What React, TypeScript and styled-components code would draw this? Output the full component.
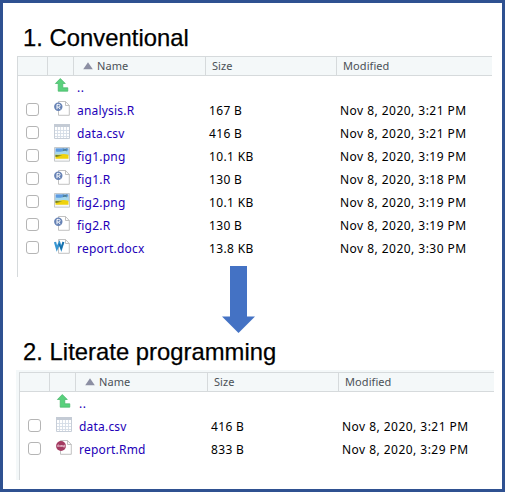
import React from "react";
import styled, { createGlobalStyle } from "styled-components";

const Global = createGlobalStyle`
  *, *::before, *::after { box-sizing: border-box; }
  body { margin: 0; background: #fff; }
`;

const Frame = styled.main`
  width: 505px;
  height: 492px;
  border: 3px solid #2f5191;
  background: #fff;
  display: flex;
  flex-direction: column;
  overflow: hidden;
`;

const Heading = styled.h1<{ $top: number }>`
  margin: ${(p) => p.$top}px 0 0 20px;
  height: 32px;
  font: 400 23.8px/28px "Liberation Sans", Arial, sans-serif;
  letter-spacing: 0.03px;
  color: #000;
  white-space: nowrap;
  flex: none;
  -webkit-text-stroke: 0.25px #000;
`;

const Panel = styled.section<{ $second?: boolean }>`
  flex: none;
  width: ${(p) => (p.$second ? 478 : 475)}px;
  height: ${(p) => (p.$second ? 110 : 221)}px;
  margin-left: ${(p) => (p.$second ? 13 : 14)}px;
  padding: ${(p) => (p.$second ? "2px 0 0 3px" : "0")};
  background: linear-gradient(#f4f8f9, #f4f8f9) 0 0 / ${(p) => (p.$second ? "3px 100%" : "0 0")} no-repeat,
    linear-gradient(#f4f8f9, #f4f8f9) 0 0 / ${(p) => (p.$second ? "100% 2px" : "0 0")} no-repeat;
`;

const Table = styled.div`
  height: 100%;
  border-left: 1px solid #d6dadc;
  font-family: "Noto Sans", "Open Sans", sans-serif;
`;

const columns = "29px 26px 132px 131px 1fr";

const HeaderRow = styled.div`
  display: grid;
  grid-template-columns: ${columns};
  height: 20px;
  border-top: 1px solid #d6dadc;
  border-bottom: 1px solid #d6dadc;
  background: #f4f8f9;
`;

const HeaderCell = styled.div`
  display: flex;
  align-items: center;
  gap: 4px;
  padding-left: 6px;
  border-left: 1px solid #d6dadc;
  font-size: 11px;
  line-height: 18px;
  letter-spacing: 0.08px;
  color: #4b5157;
  &:first-child { border-left: 0; }
  &:nth-child(3) { padding-left: 9px; }
`;

const Row = styled.div`
  display: grid;
  grid-template-columns: ${columns};
  height: 23px;
  align-items: center;
`;

const Check = styled.input`
  appearance: none;
  width: 13px;
  height: 13px;
  margin: 0 0 2px 8px;
  border: 1px solid #b5b5b5;
  border-radius: 3px;
  background: #fff;
`;

const IconCell = styled.div`
  display: flex;
  padding: 0 0 4px 7px;
`;

const FileLink = styled.a<{ $track: number }>`
  padding-left: 4px;
  font-size: 12px;
  line-height: 23px;
  letter-spacing: ${(p) => p.$track}px;
  color: #2200b8;
  text-decoration: none;
  white-space: nowrap;
`;

const Value = styled.span<{ $track: number }>`
  padding-left: 4px;
  font-size: 12px;
  line-height: 23px;
  letter-spacing: ${(p) => p.$track}px;
  color: #000;
  white-space: nowrap;
`;

const ArrowWrap = styled.div`
  flex: none;
  display: flex;
  height: 67px;
  margin: -11px 0 0 219px;
`;

type Kind = "up" | "r" | "csv" | "png" | "docx" | "rmd";

const Page = () => (
  <path d="M4.5 1.5h7l3.8 4v9.8H4.5z M11.5 1.5v4h3.8" fill="#fff" stroke="#b3b3b3" strokeWidth=".8" />
);

const FileIcon = ({ kind }: { kind: Kind }) => (
  <svg width="17" height="17" viewBox="0 0 17 17" aria-hidden="true">
    {kind === "up" && (
      <path d="M6.3 1.5 11.3 6.5H8.8v4.3h5v3.4H4.2V6.5H1.4z" fill="#59d17c" stroke="#45b468" strokeWidth=".7" strokeLinejoin="round" />
    )}
    {kind === "r" && (
      <>
        <Page />
        <circle cx="4.3" cy="6.8" r="4.2" fill="#6682b5" />
        <path d="M3 9.2V4.4h1.6q1.5 0 1.5 1.3T4.6 7H3.1M4.6 7.1 6.2 9.2" fill="none" stroke="#fff" strokeWidth="1" />
      </>
    )}
    {kind === "csv" && (
      <>
        <path d="M.5 1.5h15v14H.5z" fill="#fff" stroke="#c7ced8" />
        <path d="M0 1h16v3H0z" fill="#c4cbd5" />
        <path d="M3.5 4v11M6.5 4v11M9.5 4v11M12.5 4v11M1 7.5h14M1 10.5h14M1 13.5h14" stroke="#d5dce6" strokeWidth=".9" />
      </>
    )}
    {kind === "png" && (
      <>
        <path d="M.5 1.5h15v13.7H.5z" fill="#f7f8f8" stroke="#b8bdbf" strokeWidth=".8" />
        <path d="M1.5 2.3h13v7h-13z" fill="#5c9be0" />
        <path d="M1.5 5.4q4 1 7-.2t6-.5v5h-13z" fill="#a6d8ee" />
        <path d="M1.5 8.5q4 .5 6-.2t7 .4v4h-13z" fill="#efd20c" />
        <path d="M1.5 9q4 .6 7 .4l-7 1.7z" fill="#65752d" />
        <path d="m8.8 2.7 2 1.3-2 .9m2-.9 2.4-1.3m-2.4 1.3 2.3 1" fill="none" stroke="#436d70" strokeWidth=".7" />
      </>
    )}
    {kind === "docx" && (
      <>
        <Page />
        <path d="m1 4 1.9 6.5L5.4 5l1.9 5.5L9.4 4" fill="none" stroke="#3795d1" strokeWidth="2.2" />
        <path d="m5 5.8 2.2 4.8L9.4 4" fill="none" stroke="#176da7" strokeWidth="1.4" />
      </>
    )}
    {kind === "rmd" && (
      <>
        <Page />
        <circle cx="5" cy="7" r="4.9" fill="#a33a61" />
        <path d="M1.8 8V6h1l.6.5-.6.6h-.9m1 0 .7.9M4.4 8V6.5h2.3V8M5.5 6.6V8m3.3-2.3V8H7.4V6.7h1.4" fill="none" stroke="#f4dae3" strokeWidth=".65" />
      </>
    )}
  </svg>
);

interface FileEntry {
  name: string;
  kind: Kind;
  size: string;
  modified: string;
}

const conventional: FileEntry[] = [
  { name: "analysis.R", kind: "r", size: "167 B", modified: "Nov 8, 2020, 3:21 PM" },
  { name: "data.csv", kind: "csv", size: "416 B", modified: "Nov 8, 2020, 3:21 PM" },
  { name: "fig1.png", kind: "png", size: "10.1 KB", modified: "Nov 8, 2020, 3:19 PM" },
  { name: "fig1.R", kind: "r", size: "130 B", modified: "Nov 8, 2020, 3:18 PM" },
  { name: "fig2.png", kind: "png", size: "10.1 KB", modified: "Nov 8, 2020, 3:19 PM" },
  { name: "fig2.R", kind: "r", size: "130 B", modified: "Nov 8, 2020, 3:19 PM" },
  { name: "report.docx", kind: "docx", size: "13.8 KB", modified: "Nov 8, 2020, 3:30 PM" },
];

const literate: FileEntry[] = [
  { name: "data.csv", kind: "csv", size: "416 B", modified: "Nov 8, 2020, 3:21 PM" },
  { name: "report.Rmd", kind: "rmd", size: "833 B", modified: "Nov 8, 2020, 3:29 PM" },
];

const FileTable = ({ files, second = false }: { files: FileEntry[]; second?: boolean }) => (
  <Panel $second={second}>
    <Table>
      <HeaderRow>
        <HeaderCell />
        <HeaderCell />
        <HeaderCell>
          <svg width="10" height="8" viewBox="0 0 10 8"><path d="M5 .3 9.8 7.3H.2z" fill="#8c8fa3" /></svg>
          Name
        </HeaderCell>
        <HeaderCell>Size</HeaderCell>
        <HeaderCell>Modified</HeaderCell>
      </HeaderRow>
      <Row>
        <span />
        <IconCell><FileIcon kind="up" /></IconCell>
        <FileLink $track={0.5}>..</FileLink>
      </Row>
      {files.map((f) => (
        <Row key={f.name}>
          <Check type="checkbox" aria-label={f.name} />
          <IconCell><FileIcon kind={f.kind} /></IconCell>
          <FileLink $track={0.2}>{f.name}</FileLink>
          <Value $track={0.35}>{f.size}</Value>
          <Value $track={0.46}>{f.modified}</Value>
        </Row>
      ))}
    </Table>
  </Panel>
);

export default function App() {
  return (
    <>
      <Global />
      <Frame>
        <Heading $top={21}>1. Conventional</Heading>
        <FileTable files={conventional} />
        <ArrowWrap>
          <svg width="33" height="67" viewBox="0 0 33 67" aria-hidden="true">
            <path d="M8 0h17v50.5h8L16.5 67 0 50.5h8z" fill="#4472c4" />
          </svg>
        </ArrowWrap>
        <Heading $top={5}>2. Literate programming</Heading>
        <FileTable files={literate} second />
      </Frame>
    </>
  );
}
